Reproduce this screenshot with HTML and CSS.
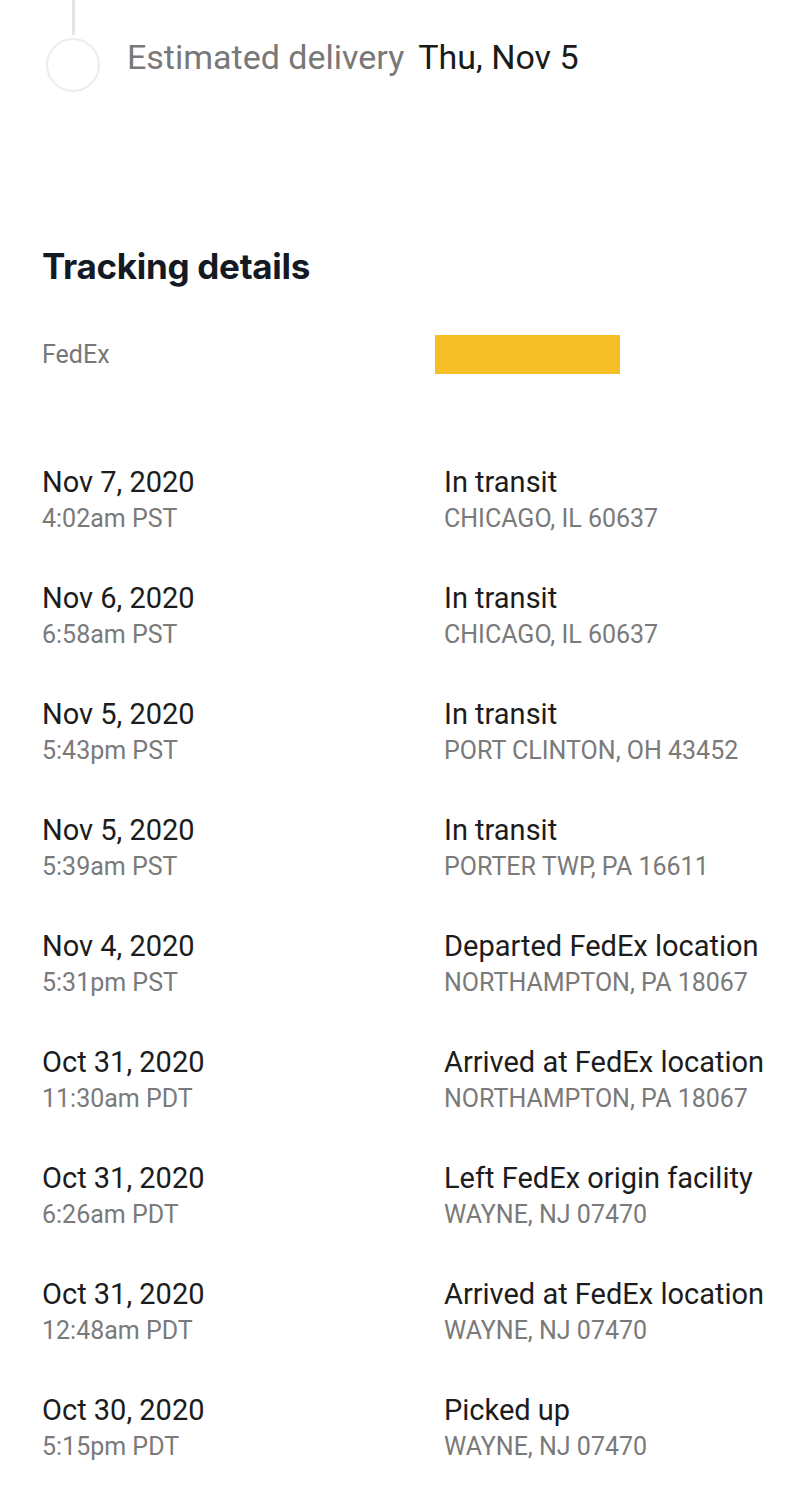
FILE: index.html
```html
<!DOCTYPE html>
<html>
<head>
<meta charset="utf-8">
<link rel="stylesheet" href="styles.css">
</head>
<body>
<div class="page">
  <div class="timeline">
    <div class="rail">
      <div class="line"></div>
      <div class="circle"></div>
    </div>
    <div class="eta">
      <span class="eta-label">Estimated delivery</span>
      <span class="eta-value">Thu, Nov 5</span>
    </div>
  </div>

  <h2 class="title">Tracking details</h2>

  <div class="carrier">
    <span class="carrier-name">FedEx</span>
    <span class="tracking-bar"></span>
  </div>

  <div class="events">
    <div class="event"><div class="col"><div class="main">Nov 7, 2020</div><div class="sub">4:02am PST</div></div><div class="col right"><div class="main">In transit</div><div class="sub">CHICAGO, IL 60637</div></div></div>
    <div class="event"><div class="col"><div class="main">Nov 6, 2020</div><div class="sub">6:58am PST</div></div><div class="col right"><div class="main">In transit</div><div class="sub">CHICAGO, IL 60637</div></div></div>
    <div class="event"><div class="col"><div class="main">Nov 5, 2020</div><div class="sub">5:43pm PST</div></div><div class="col right"><div class="main">In transit</div><div class="sub">PORT CLINTON, OH 43452</div></div></div>
    <div class="event"><div class="col"><div class="main">Nov 5, 2020</div><div class="sub">5:39am PST</div></div><div class="col right"><div class="main">In transit</div><div class="sub">PORTER TWP, PA 16611</div></div></div>
    <div class="event"><div class="col"><div class="main">Nov 4, 2020</div><div class="sub">5:31pm PST</div></div><div class="col right"><div class="main">Departed FedEx location</div><div class="sub">NORTHAMPTON, PA 18067</div></div></div>
    <div class="event"><div class="col"><div class="main">Oct 31, 2020</div><div class="sub">11:30am PDT</div></div><div class="col right"><div class="main">Arrived at FedEx location</div><div class="sub">NORTHAMPTON, PA 18067</div></div></div>
    <div class="event"><div class="col"><div class="main">Oct 31, 2020</div><div class="sub">6:26am PDT</div></div><div class="col right"><div class="main">Left FedEx origin facility</div><div class="sub">WAYNE, NJ 07470</div></div></div>
    <div class="event"><div class="col"><div class="main">Oct 31, 2020</div><div class="sub">12:48am PDT</div></div><div class="col right"><div class="main">Arrived at FedEx location</div><div class="sub">WAYNE, NJ 07470</div></div></div>
    <div class="event"><div class="col"><div class="main">Oct 30, 2020</div><div class="sub">5:15pm PDT</div></div><div class="col right"><div class="main">Picked up</div><div class="sub">WAYNE, NJ 07470</div></div></div>
  </div>
</div>
</body>
</html>
```

FILE: styles.css
```css
html, body {
  margin: 0;
  padding: 0;
  background: #ffffff;
}
body {
  font-family: Roboto, "Noto Sans", sans-serif;
  color: #1f1f1f;
}
.page {
  width: 800px;
}
.timeline {
  display: flex;
  align-items: flex-end;
  padding-left: 46px;
}
.rail {
  display: flex;
  flex-direction: column;
  align-items: center;
  width: 54px;
  flex: none;
}
.line {
  width: 3px;
  height: 35px;
  background: #e4e4e4;
}
.circle {
  width: 50px;
  height: 50px;
  border: 2px solid #ececec;
  border-radius: 50%;
  margin-top: 3px;
}
.eta {
  display: flex;
  align-items: baseline;
  gap: 14px;
  margin-left: 27px;
  height: 54px;
  margin-bottom: 1px;
  white-space: nowrap;
}
.eta-label {
  font-size: 34px;
  color: #787878;
}
.eta-value {
  font-size: 34px;
  color: #1a1a1a;
}
.title {
  margin: 154px 0 0 42px;
  font-family: Inter, Roboto, sans-serif;
  font-weight: 700;
  font-size: 35px;
  color: #141a24;
  line-height: 40px;
  letter-spacing: -0.3px;
}
.carrier {
  display: flex;
  align-items: center;
  margin: 49px 0 0 42px;
}
.carrier-name {
  width: 393px;
  flex: none;
  font-size: 25px;
  color: #777777;
}
.tracking-bar {
  display: block;
  width: 185px;
  height: 39px;
  background: #f6bf26;
}
.events {
  margin-top: 90px;
  padding-left: 42px;
}
.event {
  display: grid;
  grid-template-columns: 402px auto;
  height: 116px;
}
.main {
  font-size: 29px;
  line-height: 36px;
  color: #1c1c1c;
  white-space: nowrap;
}
.sub {
  font-size: 25px;
  line-height: 37px;
  color: #7a7a7a;
  white-space: nowrap;
}
```
